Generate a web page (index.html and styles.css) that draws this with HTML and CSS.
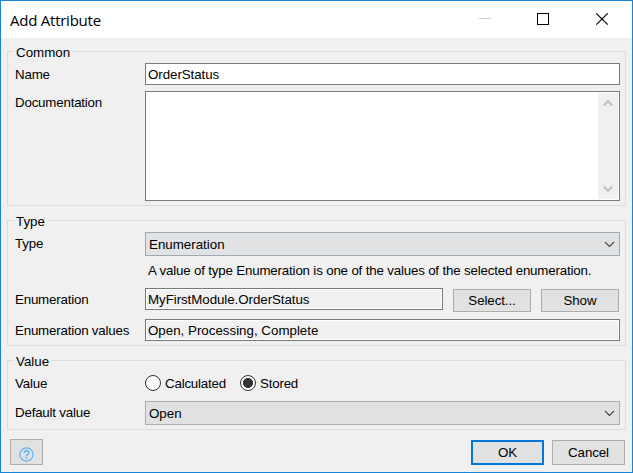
FILE: index.html
```html
<!DOCTYPE html>
<html lang="en">
<head>
<meta charset="utf-8">
<title>Add Attribute</title>
<link rel="stylesheet" href="styles.css">
</head>
<body>
<main class="window">
  <header class="titlebar">
    <h1 class="title">Add Attribute</h1>
    <svg class="window-controls" width="130" height="14" viewBox="0 0 130 14" fill="none" shape-rendering="crispEdges">
      <path d="M0 5.5h12" stroke="#ccc"/>
      <rect x="58.5" y="0.5" width="11" height="11" stroke="#000"/>
      <path d="M117.300 .3l11.400 11.400M128.700 .3l-11.400 11.400" stroke="#000" stroke-width="1.1" shape-rendering="auto"/>
    </svg>
  </header>

  <section class="group group-common">
    <h2 class="legend">Common</h2>
    <div class="row">
      <label class="label">Name</label>
      <div class="field editable">OrderStatus</div>
    </div>
    <div class="row">
      <label class="label">Documentation</label>
      <div class="textarea">
        <div class="scrollbar">
          <svg width="10" height="8" viewBox="0 0 10 8" fill="none"><path d="M.7 6.500L5 2.200l4.300 4.300" stroke="#bfbfbf" stroke-width="2"/></svg>
          <svg width="10" height="8" viewBox="0 0 10 8" fill="none"><path d="M.7 1.500L5 5.800l4.300-4.300" stroke="#bfbfbf" stroke-width="2"/></svg>
        </div>
      </div>
    </div>
  </section>

  <section class="group group-type">
    <h2 class="legend">Type</h2>
    <div class="row">
      <label class="label">Type</label>
      <div class="combo combo-cool">Enumeration
        <svg width="11" height="7" viewBox="0 0 11 7" fill="none"><path d="M1 1l4.500 4.500L10 1" stroke="#444" stroke-width="1.100"/></svg>
      </div>
    </div>
    <p class="hint">A value of type Enumeration is one of the values of the selected enumeration.</p>
    <div class="row row-pick">
      <label class="label">Enumeration</label>
      <div class="field">MyFirstModule.OrderStatus</div>
      <button class="button">Select...</button>
      <button class="button">Show</button>
    </div>
    <div class="row">
      <label class="label">Enumeration values</label>
      <div class="field field-list">Open, Processing, Complete</div>
    </div>
  </section>

  <section class="group group-value">
    <h2 class="legend">Value</h2>
    <div class="row row-radios">
      <label class="label">Value</label>
      <div class="radios">
        <span class="radio"></span><span>Calculated</span>
        <span class="radio checked"></span><span>Stored</span>
      </div>
    </div>
    <div class="row">
      <label class="label">Default value</label>
      <div class="combo">Open
        <svg width="11" height="7" viewBox="0 0 11 7" fill="none"><path d="M1 1l4.500 4.500L10 1" stroke="#444" stroke-width="1.100"/></svg>
      </div>
    </div>
  </section>

  <footer class="footer">
    <button class="button help" aria-label="Help">
      <svg width="15" height="15" viewBox="0 0 15 15" fill="none" stroke="#5cb3ee">
        <circle cx="7.500" cy="7.500" r="6.600" stroke-width="1.200"/>
        <path d="M5.200 5.900C5.200 2.900 9.800 3 9.800 5.700C9.800 7.300 7.500 7.200 7.500 9.200M7.500 10.300v1.500" stroke-width="1.500"/>
      </svg>
    </button>
    <button class="button action primary">OK</button>
    <button class="button action">Cancel</button>
  </footer>
</main>
</body>
</html>
```

FILE: styles.css
```css
* { box-sizing: border-box; }

body {
  margin: 0;
  font: 13.33px/16px "Liberation Sans", Arial, sans-serif;
  color: #000;
}

.window {
  width: 633px;
  height: 473px;
  border: 1px solid #1883d7;
  background: #f0f0f0;
  overflow: hidden;
}

.titlebar {
  display: flex;
  justify-content: space-between;
  height: 37px;
  padding: 0 23px 0 9px;
  background: #fff;
}

.title {
  margin: 9px 0 0;
  font: 15px/20px "Open Sans", sans-serif;
  letter-spacing: -0.24px;
}

.window-controls { margin-top: 12px; }

.group {
  position: relative;
  display: flex;
  flex-direction: column;
  margin: 0 6px;
  padding: 11px 5px 4px 7px;
  border: 1px solid #dcdcdc;
}

.group-common { margin-top: 13px; gap: 6px; }
.group-type { margin-top: 14px; }
.group-value { margin-top: 14px; padding-top: 12px; gap: 8px; }

.legend {
  position: absolute;
  top: -7px;
  left: 6px;
  margin: 0;
  padding: 0 2px;
  background: #f0f0f0;
  font: inherit;
}

.row {
  display: grid;
  grid-template-columns: 130px 1fr;
}

.row-pick {
  grid-template-columns: 130px 298px 78px 78px;
  height: 31px;
}

.row-pick .button { margin: 1px -10px 0 10px; }
.row-pick .button:last-child { margin: 1px -20px 0 20px; }

.label {
  padding-top: 4px;
  letter-spacing: -0.2px;
  white-space: nowrap;
}

.row-radios .label { padding-top: 3px; }

.field {
  height: 22px;
  padding: 3px 2px 1px;
  border: 1px solid #7a7a7a;
  box-shadow: inset 0 0 0 1px #fff;
  letter-spacing: -0.06px;
  white-space: nowrap;
}

.field-list { letter-spacing: 0; }

.editable, .textarea { background: #fff; }

.textarea {
  display: flex;
  justify-content: flex-end;
  height: 110px;
  padding: 1px;
  border: 1px solid #7a7a7a;
}

.scrollbar {
  display: flex;
  flex-direction: column;
  align-items: center;
  justify-content: space-between;
  width: 20px;
  padding: 6px 0;
  background: #f0f0f0;
}

.combo {
  display: flex;
  align-items: center;
  justify-content: space-between;
  height: 24px;
  padding: 1px 4px 0 3px;
  border: 1px solid #adadad;
  background: #e1e1e1;
}

.combo-cool { border-color: #a0a9b1; background: #e0e2e4; }

.hint {
  height: 32px;
  margin: 0 0 0 133px;
  padding-top: 7px;
  letter-spacing: -0.18px;
  white-space: nowrap;
}

.radios {
  display: flex;
  align-items: center;
  height: 20px;
  letter-spacing: -0.2px;
}

.radios span:not(.radio) { padding-top: 1px; }

.radio {
  width: 16px;
  height: 16px;
  margin-right: 4px;
  border: 1px solid #333;
  border-radius: 50%;
  background: #fff;
}

.radio.checked {
  margin-left: 14px;
  background: radial-gradient(circle, #333 0 4.700px, #fff 5.300px);
}

.button {
  display: flex;
  align-items: center;
  justify-content: center;
  height: 23px;
  padding: 0;
  border: 1px solid #adadad;
  border-radius: 0;
  background: #e1e1e1;
  color: #000;
  font: inherit;
  letter-spacing: -0.1px;
}

.footer {
  display: flex;
  gap: 8px;
  align-items: flex-start;
  padding: 9px 7px 0 9px;
}

.help { width: 33px; height: 26px; margin-right: auto; padding: 4px 1px 0 0; }
.action { width: 73px; height: 25px; margin-top: 1px; }
.primary { border: 2px solid #0078d7; }
```
